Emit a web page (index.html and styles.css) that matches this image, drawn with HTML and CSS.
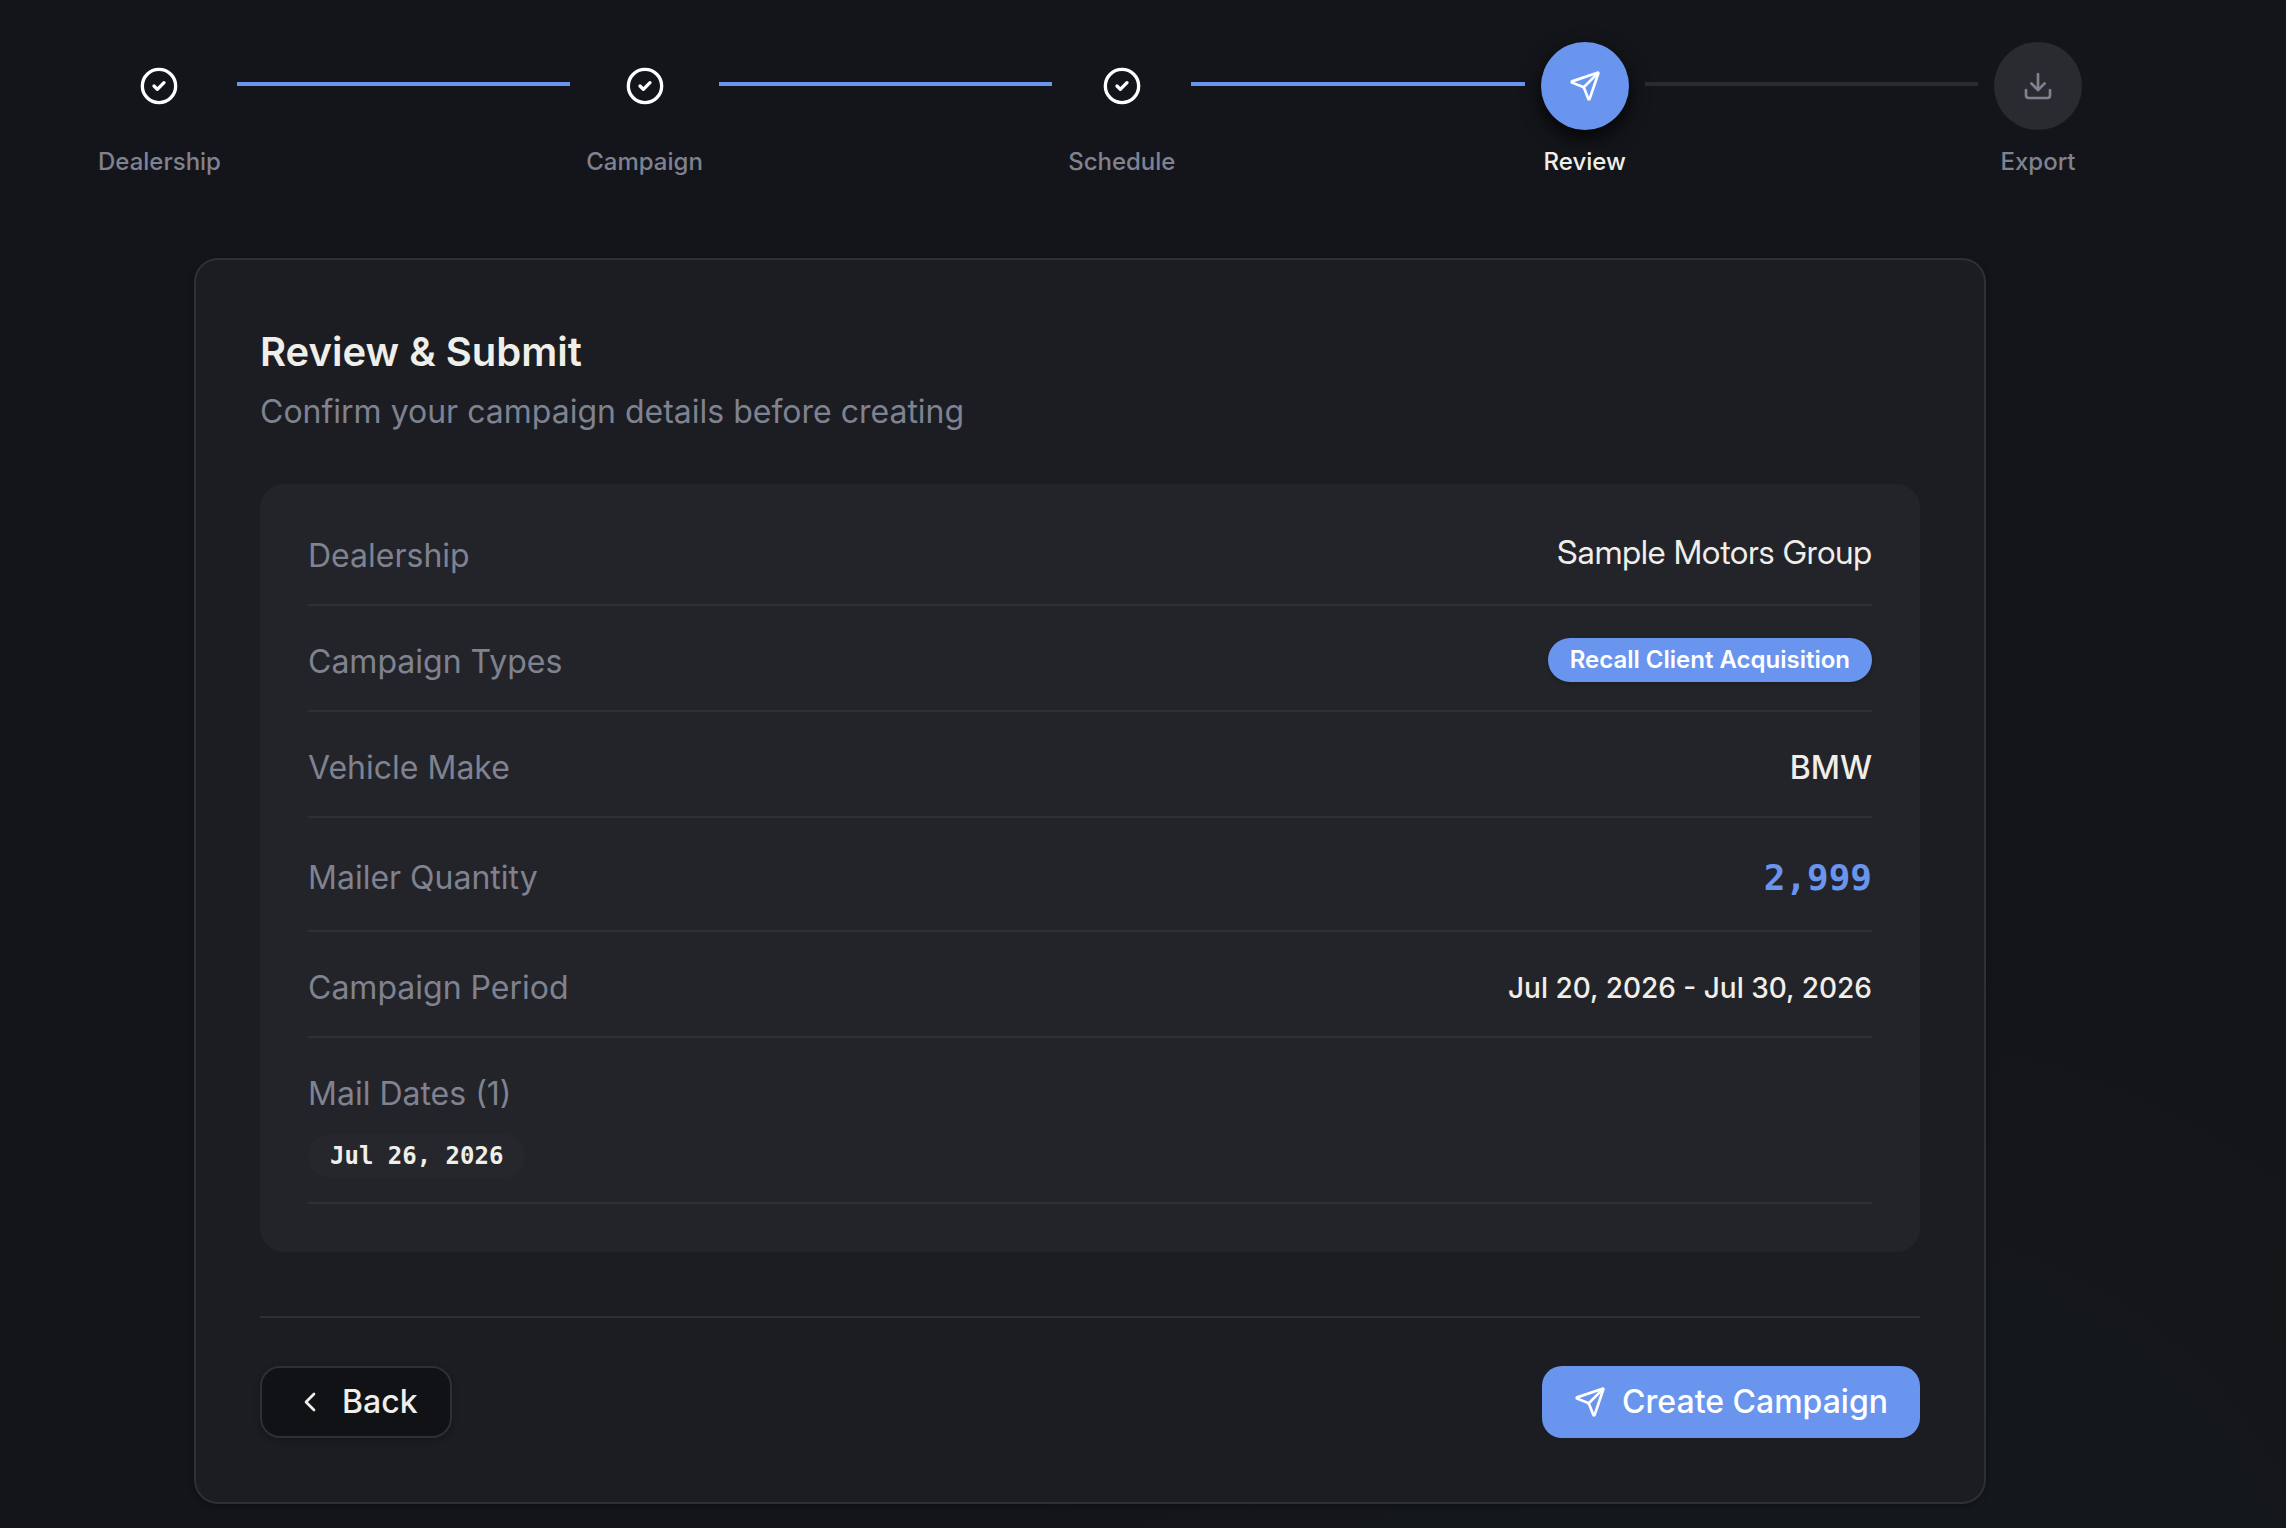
FILE: index.html
```html
<!DOCTYPE html>
<html lang="en">
<head>
<meta charset="utf-8">
<meta name="viewport" content="width=device-width, initial-scale=1">
<title>Review &amp; Submit</title>
<link rel="stylesheet" href="styles.css">
</head>
<body>
<svg class="sprite" aria-hidden="true">
  <symbol id="check" viewBox="0 0 24 24"><circle cx="12" cy="12" r="10"/><path d="m9 12 2 2 4-4"/></symbol>
  <symbol id="send" viewBox="0 0 24 24"><path d="M14.536 21.686a.5.5 0 0 0 .937-.024l6.5-19a.496.496 0 0 0-.635-.635l-19 6.5a.5.5 0 0 0-.024.937l7.93 3.18a2 2 0 0 1 1.112 1.11z"/><path d="m21.854 2.147-10.94 10.939"/></symbol>
  <symbol id="download" viewBox="0 0 24 24"><path d="M21 15v4a2 2 0 0 1-2 2H5a2 2 0 0 1-2-2v-4"/><path d="m7 10 5 5 5-5"/><path d="M12 15V3"/></symbol>
  <symbol id="chevron" viewBox="0 0 24 24"><path d="m15 18-6-6 6-6"/></symbol>
</svg>
<main class="page">
  <ol class="stepper">
    <li class="step"><span class="dot"><svg class="icon icon-check"><use href="#check"/></svg></span><span class="step-label">Dealership</span></li>
    <li class="line line-done" role="presentation"></li>
    <li class="step"><span class="dot"><svg class="icon icon-check"><use href="#check"/></svg></span><span class="step-label">Campaign</span></li>
    <li class="line line-done" role="presentation"></li>
    <li class="step"><span class="dot"><svg class="icon icon-check"><use href="#check"/></svg></span><span class="step-label">Schedule</span></li>
    <li class="line line-done" role="presentation"></li>
    <li class="step step-current" aria-current="step"><span class="dot"><svg class="icon"><use href="#send"/></svg></span><span class="step-label">Review</span></li>
    <li class="line" role="presentation"></li>
    <li class="step step-next"><span class="dot"><svg class="icon"><use href="#download"/></svg></span><span class="step-label">Export</span></li>
  </ol>

  <section class="card">
    <h1 class="title">Review &amp; Submit</h1>
    <p class="subtitle">Confirm your campaign details before creating</p>

    <dl class="summary">
      <div class="row"><dt>Dealership</dt><dd class="dealer">Sample Motors Group</dd></div>
      <div class="row"><dt>Campaign Types</dt><dd><span class="badge badge-primary">Recall Client Acquisition</span></dd></div>
      <div class="row"><dt>Vehicle Make</dt><dd class="strong">BMW</dd></div>
      <div class="row row-center"><dt>Mailer Quantity</dt><dd class="quantity">2,999</dd></div>
      <div class="row row-center"><dt>Campaign Period</dt><dd class="period">Jul 20, 2026 - Jul 30, 2026</dd></div>
      <div class="row row-stacked"><dt>Mail Dates (1)</dt><dd><span class="badge badge-date">Jul 26, 2026</span></dd></div>
    </dl>

    <div class="actions">
      <button type="button" class="button button-back"><svg class="icon"><use href="#chevron"/></svg>Back</button>
      <button type="button" class="button button-primary"><svg class="icon"><use href="#send"/></svg>Create Campaign</button>
    </div>
  </section>
</main>
</body>
</html>
```
FILE: styles.css
```css
:root {
  --bg: #14151a;
  --card: #1c1d22;
  --panel: #232429;
  --muted: #2a2b30;
  --line: #2e3035;
  --text: #f0eee9;
  --text-muted: #7f8290;
  --primary: #6a95ee;
}

* { box-sizing: border-box; }

body {
  margin: 0;
  min-height: 100vh;
  background:
    radial-gradient(ellipse at 80% 110%, rgba(34, 80, 60, 0.08), transparent 32%),
    var(--bg);
  color: var(--text);
  font-family: Inter, sans-serif;
  font-size: 32px;
  line-height: 48px;
}

.sprite { display: none; }

.page { padding: 42px 202px 24px 96px; }

.icon {
  width: 32px;
  height: 32px;
  fill: none;
  stroke: currentColor;
  stroke-width: 2;
  stroke-linecap: round;
  stroke-linejoin: round;
}
.icon-check { width: 40px; height: 40px; }

.stepper {
  display: flex;
  align-items: flex-start;
  gap: 16px;
  margin: 0 0 80px;
  padding: 0 2px;
  list-style: none;
}
.step {
  display: flex;
  flex-direction: column;
  align-items: center;
  gap: 16px;
  color: var(--text-muted);
}
.dot {
  display: grid;
  place-items: center;
  width: 88px;
  height: 88px;
  border-radius: 50%;
  color: #fff;
}
.step-label {
  font-size: 24px;
  font-weight: 500;
  line-height: 32px;
}
.step-current { color: var(--text); }
.step-current .dot {
  background: var(--primary);
  box-shadow: 0 8px 20px rgba(0, 0, 0, 0.8);
}
.step-next .dot { background: var(--muted); color: var(--text-muted); }
.line {
  flex: 1;
  height: 4px;
  margin-top: 40px;
  background: var(--muted);
}
.line-done { background: var(--primary); }

.card {
  max-width: 1792px;
  margin: 0 auto;
  padding: 64px;
  border: 2px solid var(--line);
  border-radius: 24px;
  background: var(--card);
  box-shadow: 0 2px 6px rgba(0, 0, 0, 0.3);
}
.title {
  margin: 0;
  font-size: 40px;
  font-weight: 600;
  line-height: 56px;
}
.subtitle { margin: 8px 0 48px; color: var(--text-muted); }

.summary {
  display: grid;
  gap: 32px;
  margin: 0 0 64px;
  padding: 48px;
  border-radius: 24px;
  background: var(--panel);
}
.row {
  display: flex;
  justify-content: space-between;
  align-items: flex-start;
  padding-bottom: 24px;
  border-bottom: 2px solid var(--line);
}
.row-center { align-items: center; }
.row-stacked { flex-direction: column; gap: 16px; }
dt { color: var(--text-muted); }
dd { display: flex; margin: 0; }
.dealer {
  font-family: "Inter Display", Inter, sans-serif;
  font-size: 33px;
  font-variation-settings: "opsz" 32;
  line-height: 40px;
}
.strong { font-weight: 500; }
.quantity {
  color: var(--primary);
  font-family: "DejaVu Sans Mono", monospace;
  font-size: 36px;
  font-weight: 700;
  line-height: 56px;
}
.period { font-size: 28px; font-weight: 500; }

.badge {
  padding: 6px 22px;
  border-radius: 22px;
  font-size: 24px;
  font-weight: 600;
  line-height: 32px;
}
.badge-primary {
  background: var(--primary);
  color: #fff;
  box-shadow: 0 2px 4px rgba(0, 0, 0, 0.2);
}
.badge-date { background: #26272c; font-family: "DejaVu Sans Mono", monospace; }

.actions {
  display: flex;
  justify-content: space-between;
  padding-top: 48px;
  border-top: 2px solid var(--line);
}
.button {
  display: flex;
  align-items: center;
  gap: 16px;
  height: 72px;
  padding: 0 32px;
  border: 0;
  border-radius: 20px;
  color: #fff;
  font: inherit;
  font-weight: 500;
}
.button-back {
  border: 2px solid var(--line);
  background: #111216;
  color: var(--text);
  box-shadow: 0 2px 6px rgba(0, 0, 0, 0.3);
}
.button-primary { background: var(--primary); }
```
